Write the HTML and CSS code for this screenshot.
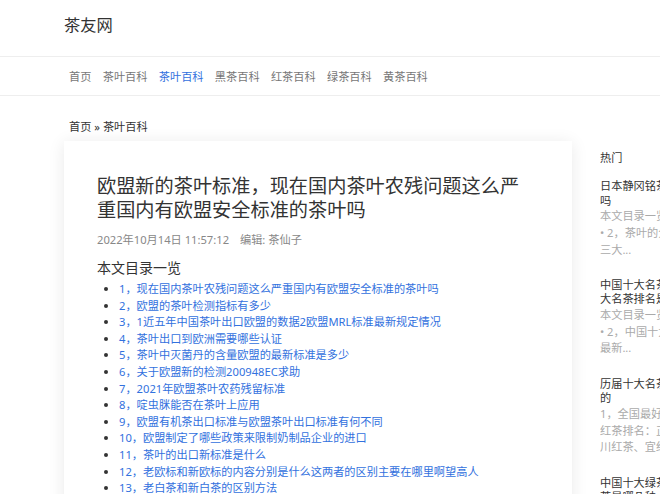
FILE: index.html
```html
<!doctype html>
<html lang="zh-CN">
  <head>
    <meta charset="utf-8" />
    <title>欧盟新的茶叶标准 - 茶友网</title>
    <link rel="stylesheet" href="styles.css">
  </head>
  <body>
    <div class="topbar">
      <a class="logo" href="#">茶友网</a>
    </div>
    <div class="navbar">
      <a href="#">首页</a>
      <a href="#">茶叶百科</a>
      <a href="#" class="active">茶叶百科</a>
      <a href="#">黑茶百科</a>
      <a href="#">红茶百科</a>
      <a href="#">绿茶百科</a>
      <a href="#">黄茶百科</a>
    </div>

    <div class="wrap">
      <div class="crumb"><a href="#">首页</a> » <a href="#">茶叶百科</a></div>
      <div class="columns">
        <div class="post">
          <h1 class="post-title">欧盟新的茶叶标准，现在国内茶叶农残问题这么严重国内有欧盟安全标准的茶叶吗</h1>
          <div class="post-meta">2022年10月14日 11:57:12 <span class="author">编辑: 茶仙子</span></div>
          <h3 class="toc-title">本文目录一览</h3>
          <ul class="toc">
            <li><a href="#">1，现在国内茶叶农残问题这么严重国内有欧盟安全标准的茶叶吗</a></li>
            <li><a href="#">2，欧盟的茶叶检测指标有多少</a></li>
            <li><a href="#">3，1近五年中国茶叶出口欧盟的数据2欧盟MRL标准最新规定情况</a></li>
            <li><a href="#">4，茶叶出口到欧洲需要哪些认证</a></li>
            <li><a href="#">5，茶叶中灭菌丹的含量欧盟的最新标准是多少</a></li>
            <li><a href="#">6，关于欧盟新的检测200948EC求助</a></li>
            <li><a href="#">7，2021年欧盟茶叶农药残留标准</a></li>
            <li><a href="#">8，啶虫脒能否在茶叶上应用</a></li>
            <li><a href="#">9，欧盟有机茶出口标准与欧盟茶叶出口标准有何不同</a></li>
            <li><a href="#">10，欧盟制定了哪些政策来限制奶制品企业的进口</a></li>
            <li><a href="#">11，茶叶的出口新标准是什么</a></li>
            <li><a href="#">12，老欧标和新欧标的内容分别是什么这两者的区别主要在哪里啊望高人</a></li>
            <li><a href="#">13，老白茶和新白茶的区别方法</a></li>
          </ul>
        </div>

        <div class="sidebar">
          <div class="side-head">热门</div>

          <div class="side-item">
            <a class="side-title" href="#">日本静冈铭茶是不是中国绿茶的一种吗</a>
            <div class="side-text">
              <span>本文目录一览：1，日本静冈铭茶好喝吗</span>
              <span>• 2，茶叶的分类有哪几种，中国茶叶</span>
              <span>三大...</span>
            </div>
          </div>

          <div class="side-item">
            <a class="side-title" href="#">中国十大名茶排行榜有哪些，中国十大名茶排名是什么</a>
            <div class="side-text">
              <span>本文目录一览：1，中国十大名茶</span>
              <span>• 2，中国十大名茶排行榜</span>
              <span>最新...</span>
            </div>
          </div>

          <div class="side-item">
            <a class="side-title" href="#">历届十大名茶名单都是如何评选出来的</a>
            <div class="side-text">
              <span>1，全国最好喝的十大</span>
              <span>红茶排名：正山小种、祁门红茶、四</span>
              <span>川红茶、宜红...</span>
            </div>
          </div>

          <div class="side-item">
            <a class="side-title" href="#">中国十大绿茶排名，中国最好喝的名茶是哪几种</a>
          </div>
        </div>
      </div>
    </div>
  </body>
</html>
```

FILE: styles.css
```css
html {
  overflow-x: hidden;
}
::-webkit-scrollbar {
  width: 0;
  height: 0;
}
body {
  margin: 0;
  background: #fff;
  color: #333;
  font-family: "Noto Sans", "Noto Sans CJK SC", sans-serif;
  font-size: 11.2px;
}
a {
  color: inherit;
  text-decoration: none;
}

/* top */
.topbar {
  height: 57px;
  padding-left: 64px;
  border-bottom: 1px solid #eee;
  box-sizing: border-box;
}
.logo {
  display: inline-block;
  margin-top: 13px;
  font-size: 16.3px;
  line-height: 24px;
  color: #333;
}
.navbar {
  display: flex;
  align-items: center;
  gap: 11.3px;
  height: 39px;
  padding-left: 69px;
  border-bottom: 1px solid #eee;
  box-sizing: border-box;
  color: #777;
}
.navbar a {
  line-height: 17px;
}
.navbar .active {
  color: #3271de;
}

/* body */
.wrap {
  padding-left: 64px;
  width: 780px;
}
.crumb {
  margin: 22px 0 6px 5px;
  line-height: 17px;
  color: #333;
}
.columns {
  display: flex;
  align-items: flex-start;
  gap: 28px;
}
.post {
  width: 508px;
  flex: none;
  box-sizing: border-box;
  padding: 33px 40px 30px 33px;
  background: #fff;
  box-shadow: 0 2px 16px rgba(0, 0, 0, 0.09);
}
.post-title {
  margin: 0;
  font-size: 19.2px;
  font-weight: normal;
  line-height: 24px;
  color: #333;
}
.post-meta {
  margin-top: 9px;
  line-height: 17px;
  color: #888;
}
.post-meta .author {
  margin-left: 8px;
}
.toc-title {
  margin: 9px 0 3px;
  font-size: 14px;
  font-weight: normal;
  line-height: 21px;
  color: #333;
}
.toc {
  margin: 0;
  padding-left: 22px;
}
.toc li {
  line-height: 16.6px;
  color: #333;
  white-space: nowrap;
}
.toc a {
  color: #3271de;
}

/* sidebar */
.sidebar {
  width: 180px;
  flex: none;
  padding-top: 8px;
}
.side-head {
  line-height: 17px;
  color: #333;
  margin-bottom: 13px;
}
.side-item {
  margin-bottom: 19.5px;
}
.side-title {
  display: block;
  line-height: 14.5px;
  color: #333;
}
.side-text {
  color: #aaa;
}
.side-text span {
  display: block;
  line-height: 16.8px;
  white-space: nowrap;
  overflow: hidden;
}
```
